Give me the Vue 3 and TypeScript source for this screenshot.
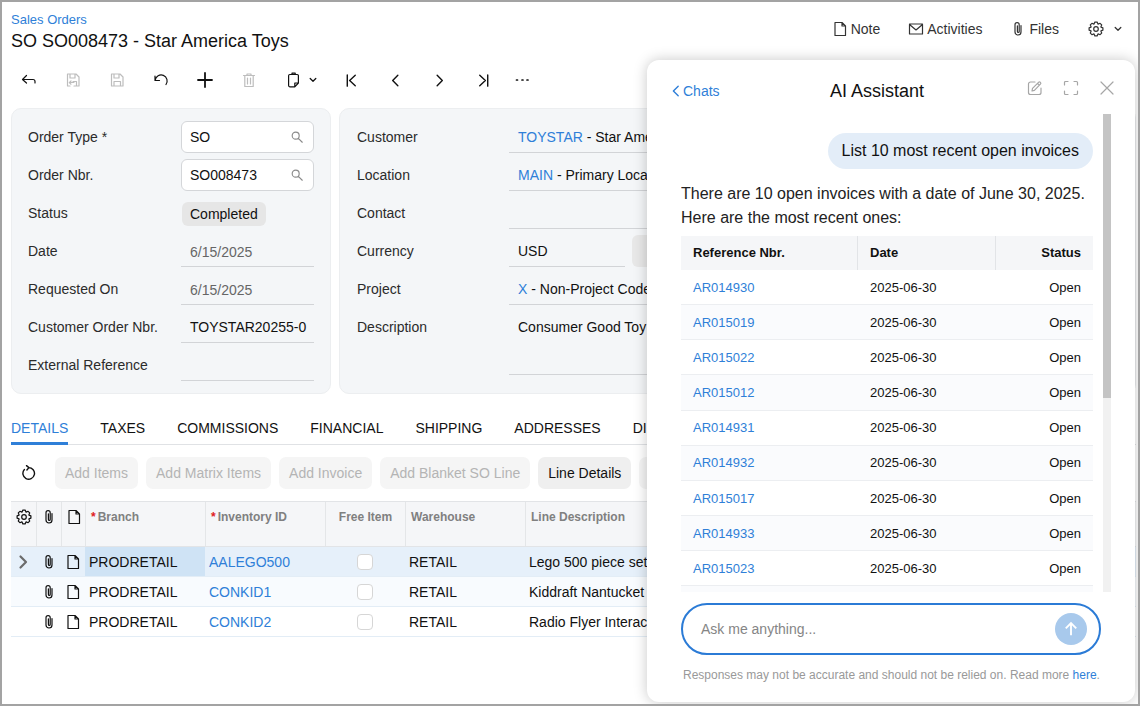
<template>
  <div class="frame">
    <div class="page">
      <header class="top">
        <div>
          <a class="crumb">Sales Orders</a>
          <h1>SO SO008473 - Star America Toys</h1>
        </div>
        <div class="top-actions">
          <span class="top-act"><svg class="ic" viewBox="0 0 16 16"><path :d="icons.note" /></svg>Note</span>
          <span class="top-act"><svg class="ic" viewBox="0 0 16 16"><path :d="icons.mail" /></svg>Activities</span>
          <span class="top-act"><svg class="ic" viewBox="0 0 16 16"><path :d="icons.clip" /></svg>Files</span>
          <span class="top-act gear-act">
            <svg class="ic" viewBox="0 0 16 16"><path :d="icons.gear" /></svg>
            <svg class="ic tiny" viewBox="0 0 16 16"><path :d="icons.down" /></svg>
          </span>
        </div>
      </header>

      <div class="toolbar">
        <button
          v-for="t in tools"
          :key="t.name"
          class="tool"
          :class="[t.cls, { off: t.off }]"
        >
          <svg class="ic" viewBox="0 0 16 16"><path :d="icons[t.name]" /></svg>
          <svg v-if="t.menu" class="ic tiny" viewBox="0 0 16 16"><path :d="icons.down" /></svg>
        </button>
      </div>

      <section class="forms">
        <div class="card left-card">
          <div class="row">
            <label>Order Type *</label>
            <div class="box">SO<svg class="ic search" viewBox="0 0 16 16"><path :d="icons.search" /></svg></div>
          </div>
          <div class="row">
            <label>Order Nbr.</label>
            <div class="box">SO008473<svg class="ic search" viewBox="0 0 16 16"><path :d="icons.search" /></svg></div>
          </div>
          <div class="row">
            <label>Status</label>
            <div><span class="pill">Completed</span></div>
          </div>
          <div class="row">
            <label>Date</label>
            <div class="line muted">6/15/2025</div>
          </div>
          <div class="row">
            <label>Requested On</label>
            <div class="line muted">6/15/2025</div>
          </div>
          <div class="row">
            <label>Customer Order Nbr.</label>
            <div class="line">TOYSTAR20255-0</div>
          </div>
          <div class="row">
            <label>External Reference</label>
            <div class="line"></div>
          </div>
        </div>

        <div class="card right-card">
          <div class="row">
            <label>Customer</label>
            <div class="line"><a>TOYSTAR</a>&nbsp;- Star Ame</div>
          </div>
          <div class="row">
            <label>Location</label>
            <div class="line"><a>MAIN</a>&nbsp;- Primary Loca</div>
          </div>
          <div class="row">
            <label>Contact</label>
            <div class="line"></div>
          </div>
          <div class="row">
            <label>Currency</label>
            <div class="currency">
              <div class="line usd">USD</div>
              <div class="cur-btn"></div>
            </div>
          </div>
          <div class="row">
            <label>Project</label>
            <div class="line"><a>X</a>&nbsp;- Non-Project Code</div>
          </div>
          <div class="row tall">
            <label>Description</label>
            <div class="line area">Consumer Good Toy</div>
          </div>
        </div>
      </section>

      <nav class="tabs">
        <span v-for="(t, i) in tabs" :key="t" class="tab" :class="{ active: i === 0 }">{{ t }}</span>
      </nav>

      <div class="actions">
        <svg class="ic refresh" viewBox="0 0 16 16"><path :d="icons.refresh" /></svg>
        <button v-for="b in disabledButtons" :key="b" class="act off">{{ b }}</button>
        <button class="act">Line Details</button>
        <button class="act off spare"></button>
      </div>

      <div class="grid">
        <div class="grid-row head">
          <div class="cell icon"><svg class="ic" viewBox="0 0 16 16"><path :d="icons.gear" /></svg></div>
          <div class="cell icon"><svg class="ic" viewBox="0 0 16 16"><path :d="icons.clip" /></svg></div>
          <div class="cell icon"><svg class="ic" viewBox="0 0 16 16"><path :d="icons.note" /></svg></div>
          <div class="cell"><i>*</i>Branch</div>
          <div class="cell"><i>*</i>Inventory ID</div>
          <div class="cell center">Free Item</div>
          <div class="cell">Warehouse</div>
          <div class="cell">Line Description</div>
        </div>
        <div v-for="(r, i) in lines" :key="r.id" class="grid-row body" :class="{ current: i === 0, tint: i === 1 }">
          <div class="cell icon">
            <svg v-if="i === 0" class="ic caret" viewBox="0 0 16 16"><path :d="icons.next" /></svg>
          </div>
          <div class="cell icon"><svg class="ic" viewBox="0 0 16 16"><path :d="icons.clip" /></svg></div>
          <div class="cell icon"><svg class="ic" viewBox="0 0 16 16"><path :d="icons.note" /></svg></div>
          <div class="cell branch">PRODRETAIL</div>
          <div class="cell"><a>{{ r.id }}</a></div>
          <div class="cell center"><span class="check"></span></div>
          <div class="cell">RETAIL</div>
          <div class="cell">{{ r.desc }}</div>
        </div>
      </div>
    </div>

    <aside class="chat">
      <div class="chat-head">
        <a class="back">
          <svg class="ic" viewBox="0 0 16 16"><path :d="icons.prev" /></svg>Chats
        </a>
        <h2>AI Assistant</h2>
        <div class="chat-tools">
          <svg class="ic" viewBox="0 0 16 16"><path :d="icons.edit" /></svg>
          <svg class="ic" viewBox="0 0 16 16"><path :d="icons.expand" /></svg>
          <svg class="ic" viewBox="0 0 16 16"><path :d="icons.close" /></svg>
        </div>
      </div>

      <div class="chat-body">
        <div class="messages">
          <div class="bubble">List 10 most recent open invoices</div>
          <p class="answer">
            There are 10 open invoices with a date of June 30, 2025.<br />
            Here are the most recent ones:
          </p>
          <div class="inv head">
            <span>Reference Nbr.</span><span>Date</span><span>Status</span>
          </div>
          <div v-for="ref in invoices" :key="ref" class="inv">
            <span><a>{{ ref }}</a></span><span>2025-06-30</span><span>Open</span>
          </div>
          <div class="inv"></div>
        </div>
        <div class="scrollbar"><div class="thumb"></div></div>
      </div>

      <div class="ask">
        <span>Ask me anything...</span>
        <span class="send">
          <svg viewBox="0 0 16 16"><path d="M8 13V3.5M3.8 7.5 8 3.3l4.2 4.2" /></svg>
        </span>
      </div>
      <p class="disclaimer">
        Responses may not be accurate and should not be relied on. Read more <a>here</a>.
      </p>
    </aside>
  </div>
</template>

<script setup lang="ts">
// 8 toothed gear outline plus hub
function gearPath(): string {
  const pts: string[] = []
  const teeth = 8
  for (let i = 0; i < teeth; i++) {
    const a = (i / teeth) * Math.PI * 2
    const step = Math.PI / teeth
    const spots: [number, number][] = [
      [5.3, a - step * 0.95],
      [7, a - step * 0.42],
      [7, a + step * 0.42],
      [5.3, a + step * 0.95],
    ]
    for (const [r, t] of spots) {
      const x = 8 + r * Math.cos(t)
      const y = 8 + r * Math.sin(t)
      pts.push(`${pts.length ? 'L' : 'M'}${x.toFixed(2)} ${y.toFixed(2)}`)
    }
  }
  return pts.join(' ') + ' Z M10.3 8a2.3 2.3 0 1 1-4.6 0 2.3 2.3 0 0 1 4.6 0Z'
}

const icons: Record<string, string> = {
  back: 'M5.5 3.5 1.5 7.5l4 3.5M1.5 7.5H12a2 2 0 0 1 2 2V11',
  saveback: 'M5 14H2.5V2H11l3 3v9H9 M5 2v4h5V2 M9 10.5H4.5M6 9l-1.7 1.6L6 12.2 M11.5 14V9.5H8',
  save: 'M2.5 2H11l3 3v9H2.5Z M5 2v4h5V2 M5 14V9.5h6.5V14',
  undo: 'M2 4v4.5h4.5M2.2 8.2A6 6 0 1 1 13 12.5',
  add: 'M8 1v14M1 8h14',
  trash: 'M2.5 3.5h11M6 3.5V2h4v1.5M3.8 3.5V14.5h8.4V3.5M6.5 6v6M9.5 6v6',
  paste: 'M3.8 2.5h7.4a1.2 1.2 0 0 1 1.2 1.2V11l-3.6 3.8H3.8a1.2 1.2 0 0 1-1.2-1.2V3.7a1.2 1.2 0 0 1 1.2-1.2ZM12.4 11H8.8v3.8M6 2.5V1.2h3.2v1.3',
  first: 'M3.5 2v12M12 2.5 6 8l6 5.5',
  prev: 'M10.5 2.5 5 8l5.5 5.5',
  next: 'M5.5 2.5 11 8l-5.5 5.5',
  last: 'M12.5 2v12M4 2.5 10 8l-6 5.5',
  more: 'M2.5 8h1M8 8h1M13 8h1',
  down: 'M3.5 5.5 8 10l4.5-4.5',
  note: 'M3 1.5h7l3.5 3.5v9.5H3ZM10 1.5V5h3.5',
  mail: 'M1.5 3h13v10h-13ZM1.5 3.5 8 9l6.5-5.5',
  clip: 'M11 4.5V11a3 3 0 0 1-6 0V3.8a2.1 2.1 0 0 1 4.2 0V10.5a.9.9 0 0 1-1.8 0V4.8',
  gear: gearPath(),
  search: 'M10.5 6.5a4 4 0 1 1-8 0 4 4 0 0 1 8 0ZM9.5 9.5l4.5 4.5',
  refresh: 'M7.5 2.6A5.8 5.8 0 1 1 3.4 4.5M5.5.6l2.4 2-2 2.4',
  edit: 'M8 2H3.5a2 2 0 0 0-2 2v8.5a2 2 0 0 0 2 2H12a2 2 0 0 0 2-2V8M5 11l.5-2.6 6-6.1a1.3 1.3 0 0 1 1.9 1.9l-6 6.1ZM10.5 3.3l1.9 1.9',
  expand: 'M1.5 5V2.5a1 1 0 0 1 1-1H5M11 1.5h2.5a1 1 0 0 1 1 1V5M14.5 11v2.5a1 1 0 0 1-1 1H11M5 14.5H2.5a1 1 0 0 1-1-1V11',
  close: 'M2 2l12 12M14 2 2 14',
}

const tools = [
  { name: 'back' },
  { name: 'saveback', off: true },
  { name: 'save', off: true },
  { name: 'undo' },
  { name: 'add', cls: 'bold' },
  { name: 'trash', off: true },
  { name: 'paste', menu: true, cls: 'wide' },
  { name: 'first', cls: 'nav' },
  { name: 'prev', cls: 'nav' },
  { name: 'next', cls: 'nav' },
  { name: 'last', cls: 'nav' },
  { name: 'more', cls: 'dots' },
]

const tabs = ['DETAILS', 'TAXES', 'COMMISSIONS', 'FINANCIAL', 'SHIPPING', 'ADDRESSES', 'DI']

const disabledButtons = ['Add Items', 'Add Matrix Items', 'Add Invoice', 'Add Blanket SO Line']

const lines = [
  { id: 'AALEGO500', desc: 'Lego 500 piece set' },
  { id: 'CONKID1', desc: 'Kiddraft Nantucket' },
  { id: 'CONKID2', desc: 'Radio Flyer Interac' },
]

const invoices = [
  'AR014930', 'AR015019', 'AR015022', 'AR015012', 'AR014931',
  'AR014932', 'AR015017', 'AR014933', 'AR015023',
]
</script>

<style>
html, body { margin: 0; background: #fff; }
</style>

<style scoped>
* { box-sizing: border-box; }

.frame {
  position: relative;
  width: 1140px;
  height: 706px;
  border: 2px solid #a3a3a3;
  overflow: hidden;
  background: #fff;
  font-family: "Liberation Sans", Arial, sans-serif;
  font-size: 14px;
  color: #111;
}
a { color: #2f7fd8; }

.ic {
  width: 16px;
  height: 16px;
  flex: none;
  fill: none;
  stroke: currentColor;
  stroke-width: 1.2;
  stroke-linejoin: round;
  stroke-linecap: round;
}
.tiny { width: 10px; height: 10px; stroke-width: 2; }

.page { width: 1134px; padding-left: 9px; }

.top {
  display: flex;
  justify-content: space-between;
  height: 56px;
  padding: 11px 13px 0 0;
}
.crumb { display: block; font-size: 13px; line-height: 14px; }
h1 { margin: 0; font-size: 18px; font-weight: 400; line-height: 28px; }
.top-actions { display: flex; gap: 28px; align-items: center; height: 32px; color: #333; }
.top-act { display: flex; align-items: center; gap: 3px; }
.gear-act { gap: 9px; margin-left: 1px; }

.toolbar { display: flex; height: 44px; margin-left: -4px; }
.tool {
  display: flex;
  align-items: center;
  justify-content: center;
  gap: 6px;
  width: 44px;
  padding: 0;
  border: 0;
  background: none;
  color: #111;
}
.tool.off { color: #bdbdbd; }
.tool.wide { width: 58px; padding-left: 3px; }
.tool.bold .ic { stroke-width: 1.8; }
.tool.nav .ic { stroke-width: 1.5; width: 15px; height: 15px; }
.tool.dots { width: 34px; }
.tool.dots .ic { stroke-width: 1.7; }

.forms { display: flex; gap: 8px; margin-top: 6px; }
.card {
  display: flex;
  flex-direction: column;
  gap: 6px;
  padding: 12px 16px;
  background: #f4f6f8;
  border: 1px solid #eceef0;
  border-radius: 10px;
}
.left-card { width: 320px; flex: none; }
.right-card { flex: 1; padding-left: 17px; }
.row { display: grid; grid-template-columns: 153px 1fr; height: 32px; }
.right-card .row { grid-template-columns: 152px 1fr; }
.row.tall { height: 64px; }
.row label { line-height: 32px; color: #2b2b2b; }

.box {
  display: flex;
  align-items: center;
  justify-content: space-between;
  height: 32px;
  padding: 0 9px 0 8px;
  background: #fff;
  border: 1px solid #d4d6d9;
  border-radius: 6px;
}
.search { width: 14px; height: 14px; color: #8a8a8a; stroke-width: 1.3; }
.pill {
  display: inline-block;
  height: 24px;
  margin: 5px 0 0 1px;
  padding: 0 8px;
  line-height: 25px;
  background: #e6e6e6;
  border-radius: 6px;
}
.line {
  height: 32px;
  padding: 0 8px 0 9px;
  line-height: 32px;
  white-space: nowrap;
  overflow: hidden;
  border-bottom: 1px solid #d2d4d7;
}
.line.muted { color: #666; line-height: 34px; }
.line.area { height: 64px; }
.currency { display: flex; gap: 7px; }
.usd { width: 116px; }
.cur-btn { flex: 1; background: #e8e8e8; border-radius: 6px; }

.tabs {
  display: flex;
  gap: 32px;
  height: 31px;
  margin: 20px 0 0;
  line-height: 28px;
  border-bottom: 1px solid #e0e2e5;
}
.tab { height: 31px; white-space: nowrap; }
.tab.active { color: #2f7fd8; border-bottom: 3px solid #2f7fd8; }

.actions { display: flex; align-items: center; gap: 8px; height: 32px; margin-top: 12px; }
.refresh { width: 16px; height: 16px; margin: 0 10px 0 10px; stroke-width: 1.4; }
.act {
  height: 32px;
  padding: 0 10px;
  border: 0;
  border-radius: 7px;
  background: #efefef;
  color: #111;
  font: inherit;
  white-space: nowrap;
}
.act.off { background: #f5f5f5; color: #b4b4b4; }
.spare { width: 90px; }

.grid { margin-top: 12px; }
.grid-row {
  display: grid;
  grid-template-columns: 25px 25px 24px 120px 120px 80px 120px 1fr;
}
.cell { padding-left: 4px; white-space: nowrap; overflow: hidden; }
.body .cell { padding-top: 1px; }
.cell.icon { padding: 0; display: flex; justify-content: center; }
.cell.center { padding: 0; display: flex; justify-content: center; align-items: center; }

.head.grid-row {
  height: 46px;
  background: #f5f6f8;
  border-top: 1px solid #e2e4e7;
  border-bottom: 1px solid #e2e4e7;
}
.head .cell {
  padding: 8px 0 0 5px;
  font-size: 12px;
  font-weight: 700;
  line-height: 14px;
  color: #808080;
  border-left: 1px solid #e4e6e8;
}
.head .cell:first-child { border-left: 0; }
.head .cell.icon { padding: 7px 0 0; color: #111; }
.head .cell.center { padding: 8px 0 0; align-items: flex-start; }
.head i { padding-right: 2px; font-style: normal; color: #e01b24; }

.body.grid-row { height: 30px; line-height: 29px; border-bottom: 1px solid #e3edf6; }
.body .cell.icon { padding: 0; align-items: center; }
.body .cell.center { padding: 0; }
.current { background: #e6f0fa; }
.current .branch { background: #cfe3f5; }
.tint { background: #f8fbfe; }
.caret { color: #6b6b6b; stroke-width: 2.2; margin-left: -2px; }
.check {
  width: 16px;
  height: 16px;
  background: #fff;
  border: 1px solid #d6d6d6;
  border-radius: 4px;
}

/* floating assistant panel */
.chat {
  position: absolute;
  left: 645px;
  top: 58px;
  width: 488px;
  height: 642px;
  display: flex;
  flex-direction: column;
  background: #fff;
  border-radius: 12px;
  box-shadow: 0 0 14px rgba(0, 0, 0, 0.22);
}
.chat-head {
  display: flex;
  align-items: center;
  height: 54px;
  padding: 6px 20px 0 23px;
}
.back { display: flex; align-items: center; gap: 0; width: 161px; margin-left: -1px; padding-top: 2px; }
.back .ic { width: 14px; height: 14px; stroke-width: 1.6; }
h2 { margin: 2px 0 0; font-size: 18px; font-weight: 400; white-space: nowrap; }
.chat-tools { display: flex; gap: 20px; margin-left: auto; margin-top: -4px; color: #a6a6a6; }

.chat-body { display: flex; gap: 10px; height: 478px; padding: 0 24px 0 34px; }
.messages { width: 412px; overflow: hidden; padding-top: 19px; }
.bubble {
  width: fit-content;
  margin-left: auto;
  padding: 0 14px;
  font-size: 16px;
  line-height: 36px;
  background: #e3edf8;
  border-radius: 18px;
}
.answer { margin: 13px 0 6px; font-size: 16px; line-height: 24px; color: #222; }
.inv {
  display: grid;
  grid-template-columns: 177px 138px 97px;
  height: 35.17px;
  align-items: center;
  font-size: 13px;
  border-bottom: 1px solid #eceef1;
}
.inv:nth-child(odd) { background: #fafbfd; }
.inv span { padding-left: 12px; }
.inv span:last-child { padding: 0 12px 0 0; text-align: right; }
.inv.head {
  height: 34px;
  background: #f5f6f8;
  border-bottom: 0;
  font-weight: 700;
  align-items: stretch;
}
.inv.head span { line-height: 33px; }
.inv.head span:not(:last-child) { border-right: 1px solid #e2e4e7; }
.scrollbar { width: 8px; background: #f1f1f1; }
.thumb { height: 284px; background: #c4c4c4; }

.ask {
  display: flex;
  align-items: center;
  justify-content: space-between;
  width: 420px;
  height: 52px;
  margin: 11px 0 0 34px;
  padding: 0 12px 0 18px;
  border: 2px solid #2b7bd6;
  border-radius: 26px;
  color: #858585;
}
.send {
  display: flex;
  align-items: center;
  justify-content: center;
  width: 32px;
  height: 32px;
  border-radius: 50%;
  background: #a8c9ec;
}
.send svg {
  width: 20px;
  height: 20px;
  fill: none;
  stroke: #fff;
  stroke-width: 1.5;
}
.disclaimer {
  margin: 13px 0 0;
  padding-left: 36px;
  font-size: 12px;
  line-height: 14px;
  color: #999;
  white-space: nowrap;
}
</style>
